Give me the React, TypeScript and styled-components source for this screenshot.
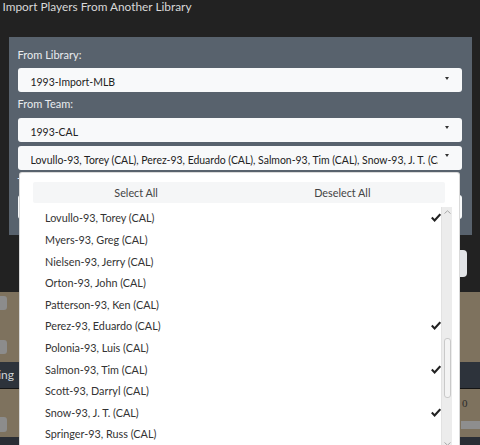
import React from "react";
import styled, { createGlobalStyle } from "styled-components";

const GlobalStyle = createGlobalStyle`
  html, body {
    margin: 0;
    padding: 0;
    background: #222;
  }
  body {
    font-family: Lato, "Open Sans", sans-serif;
    font-size: 10.8px;
    overflow: hidden;
  }
  * {
    box-sizing: border-box;
  }
`;

const Screen = styled.div`
  width: 480px;
  height: 445px;
  overflow: hidden;
  display: flex;
  flex-direction: column;
  background: #222;
`;

/* ---------- dialog ---------- */

const Dialog = styled.section`
  flex: none;
  height: 292px;
  display: flex;
  flex-direction: column;
`;

const Title = styled.h5`
  margin: 0;
  padding-left: 2.5px;
  font-size: 11.85px;
  line-height: 14px;
  font-weight: 400;
  color: #d8d8d8;
`;

const Panel = styled.div`
  margin: 23px 8.4px 0 9px;
  padding: 6px 10px 16px 8.5px;
  background: #58626d;
  display: flex;
  flex-direction: column;
`;

const Label = styled.label`
  display: block;
  margin: 5px 0 7.3px;
  font-size: 11px;
  line-height: 13px;
  color: #e9ecef;
`;

const Field = styled.div<{ $gap?: number }>`
  position: relative;
  margin-top: ${(p) => p.$gap ?? 0}px;
`;

const SelectBox = styled.div`
  display: flex;
  align-items: center;
  height: 24px;
  padding: 0 12.5px 0 13px;
  background: #f8f9fa;
  border-radius: 3px;
  color: #222;
`;

const SelectText = styled.span`
  flex: 1;
  min-width: 0;
  align-self: stretch;
  overflow: hidden;
  white-space: nowrap;
  padding-top: 4px;
  font-size: 10.45px;
  line-height: 20px;
`;

const Caret = styled.span`
  flex: none;
  width: 0;
  height: 0;
  margin: 0 0 4.5px 7px;
  border-top: 3px solid #333;
  border-left: 2.5px solid transparent;
  border-right: 2.5px solid transparent;
`;

/* ---------- dropdown menu ---------- */

const Menu = styled.div`
  position: absolute;
  z-index: 10;
  top: calc(100% + 2.3px);
  left: 1px;
  right: 1.7px;
  background: #fff;
  border: 1px solid rgba(0, 0, 0, 0.15);
  border-radius: 3px;
  padding: 0 7px 8px 5.5px;
`;

const ActionsBox = styled.div`
  display: flex;
  height: 21px;
  margin: 9.6px 6.5px 3.7px 8px;
  background: #f5f6f7;
  border-radius: 2px;
`;

const ActionButton = styled.button`
  flex: 1;
  border: 0;
  background: transparent;
  font: inherit;
  color: #444;
  padding: 0;
  cursor: pointer;
`;

const ListRow = styled.div`
  display: flex;
  height: 242px;
`;

const Options = styled.ul`
  flex: 1;
  min-width: 0;
  margin: 0;
  padding: 0;
  list-style: none;
  overflow: hidden;
`;

const Option = styled.li`
  display: flex;
  align-items: center;
  justify-content: space-between;
  height: 21.6px;
  padding: 0 0 0 20px;
  color: #333;
  white-space: nowrap;
`;

const Scrollbar = styled.div`
  flex: none;
  width: 10.5px;
  display: flex;
  flex-direction: column;
  background: #ececec;
  border-left: 1px solid #e2e2e2;
`;

const ScrollArrow = styled.div`
  flex: none;
  height: 10px;
  display: flex;
  align-items: center;
  justify-content: center;
`;

const ScrollTrack = styled.div`
  flex: 1;
  display: flex;
  flex-direction: column;
  align-items: center;
`;

const ScrollThumb = styled.div`
  width: 7px;
  height: 60px;
  margin-top: 121px;
  background: #f3f3f3;
  border: 1px solid #c9c9c9;
  border-radius: 3px;
`;

/* ---------- dialog footer ---------- */

const Footer = styled.div`
  display: flex;
  justify-content: flex-end;
  padding: 15px 13px 0 0;
`;

const Button = styled.button`
  height: 27px;
  width: 72px;
  border: 0;
  border-radius: 4px;
  background: #e3e5e8;
  color: #222;
  font: inherit;
`;

/* ---------- page behind the dialog ---------- */

const Page = styled.div`
  flex: 1;
  display: flex;
  flex-direction: column;
`;

const Band = styled.div<{ $h: number; $tone: "tan" | "navy" }>`
  flex: none;
  height: ${(p) => p.$h}px;
  display: flex;
  justify-content: space-between;
  background: ${(p) => (p.$tone === "tan" ? "#7e725e" : "#2d333b")};
  border-bottom: ${(p) => (p.$tone === "navy" ? "1px solid #141414" : "0")};
`;

const Rest = styled.div`
  flex: 1;
  background: #2a2e35;
`;

const EdgeCell = styled.div<{ $w: number; $pt: number; $gap?: number }>`
  width: ${(p) => p.$w}px;
  overflow: hidden;
  display: flex;
  flex-direction: column;
  align-items: flex-end;
  gap: ${(p) => p.$gap ?? 0}px;
  padding-top: ${(p) => p.$pt}px;
`;

const RightCell = styled.div<{ $w: number; $pt: number }>`
  width: ${(p) => p.$w}px;
  overflow: hidden;
  display: flex;
  flex-direction: column;
  padding-top: ${(p) => p.$pt}px;
`;

const CheckSquare = styled.span<{ $size?: number }>`
  flex: none;
  width: ${(p) => p.$size ?? 14}px;
  height: ${(p) => p.$size ?? 14}px;
  background: #8c8c8c;
  border-radius: 3px;
`;

const SectionTitle = styled.span`
  white-space: nowrap;
  color: #cfd3d8;
  font-size: 12px;
  line-height: 26px;
`;

const CellValue = styled.span`
  padding-left: 1px;
  color: #2b2b2b;
  font-family: "Liberation Serif", serif;
  font-size: 11px;
  line-height: 11px;
`;

const ValueBar = styled.span`
  display: block;
  height: 8px;
  margin-top: 12px;
  background: #8e8e8e;
`;

/* ---------- icons ---------- */

const CheckIcon = () => (
  <svg width="10" height="9" viewBox="0 0 10 9">
    <polyline
      points="0.8,4.6 3.6,7.4 9.3,1.2"
      fill="none"
      stroke="#222"
      strokeWidth="2.1"
    />
  </svg>
);

const Chevron = ({ up }: { up?: boolean }) => (
  <svg width="7" height="4" viewBox="0 0 7 4">
    <polyline
      points={up ? "0.5,3.5 3.5,0.8 6.5,3.5" : "0.5,0.5 3.5,3.2 6.5,0.5"}
      fill="none"
      stroke="#a8a8a8"
      strokeWidth="1"
    />
  </svg>
);

/* ---------- data ---------- */

const players: { name: string; picked: boolean }[] = [
  { name: "Lovullo-93, Torey (CAL)", picked: true },
  { name: "Myers-93, Greg (CAL)", picked: false },
  { name: "Nielsen-93, Jerry (CAL)", picked: false },
  { name: "Orton-93, John (CAL)", picked: false },
  { name: "Patterson-93, Ken (CAL)", picked: false },
  { name: "Perez-93, Eduardo (CAL)", picked: true },
  { name: "Polonia-93, Luis (CAL)", picked: false },
  { name: "Salmon-93, Tim (CAL)", picked: true },
  { name: "Scott-93, Darryl (CAL)", picked: false },
  { name: "Snow-93, J. T. (CAL)", picked: true },
  { name: "Springer-93, Russ (CAL)", picked: false },
];

const Select = ({ value }: { value: string }) => (
  <SelectBox>
    <SelectText>{value}</SelectText>
    <Caret />
  </SelectBox>
);

export default function App() {
  const picked = players.filter((p) => p.picked).map((p) => p.name).join(", ");

  return (
    <Screen>
      <GlobalStyle />
      <Dialog>
        <Title>Import Players From Another Library</Title>
        <Panel>
          <Label>From Library:</Label>
          <Select value="1993-Import-MLB" />
          <Label>From Team:</Label>
          <Select value="1993-CAL" />
          <Field $gap={4}>
            <Select value={picked} />
            <Menu>
              <ActionsBox>
                <ActionButton>Select All</ActionButton>
                <ActionButton>Deselect All</ActionButton>
              </ActionsBox>
              <ListRow>
                <Options>
                  {players.map((p) => (
                    <Option key={p.name}>
                      <span>{p.name}</span>
                      {p.picked && <CheckIcon />}
                    </Option>
                  ))}
                </Options>
                <Scrollbar>
                  <ScrollArrow>
                    <Chevron up />
                  </ScrollArrow>
                  <ScrollTrack>
                    <ScrollThumb />
                  </ScrollTrack>
                  <ScrollArrow>
                    <Chevron />
                  </ScrollArrow>
                </Scrollbar>
              </ListRow>
            </Menu>
          </Field>
          <Label>To Team:</Label>
          <Select value="" />
        </Panel>
        <Footer>
          <Button>Import</Button>
        </Footer>
      </Dialog>
      <Page>
        <Band $h={70} $tone="tan">
          <EdgeCell $w={7} $pt={4} $gap={30}>
            <CheckSquare />
            <CheckSquare />
          </EdgeCell>
        </Band>
        <Band $h={27} $tone="navy">
          <EdgeCell $w={14} $pt={0}>
            <SectionTitle>Pitching</SectionTitle>
          </EdgeCell>
        </Band>
        <Band $h={48} $tone="tan">
          <EdgeCell $w={7} $pt={28}>
            <CheckSquare $size={15} />
          </EdgeCell>
          <RightCell $w={19} $pt={9}>
            <CellValue>0</CellValue>
            <ValueBar />
          </RightCell>
        </Band>
        <Rest />
      </Page>
    </Screen>
  );
}
